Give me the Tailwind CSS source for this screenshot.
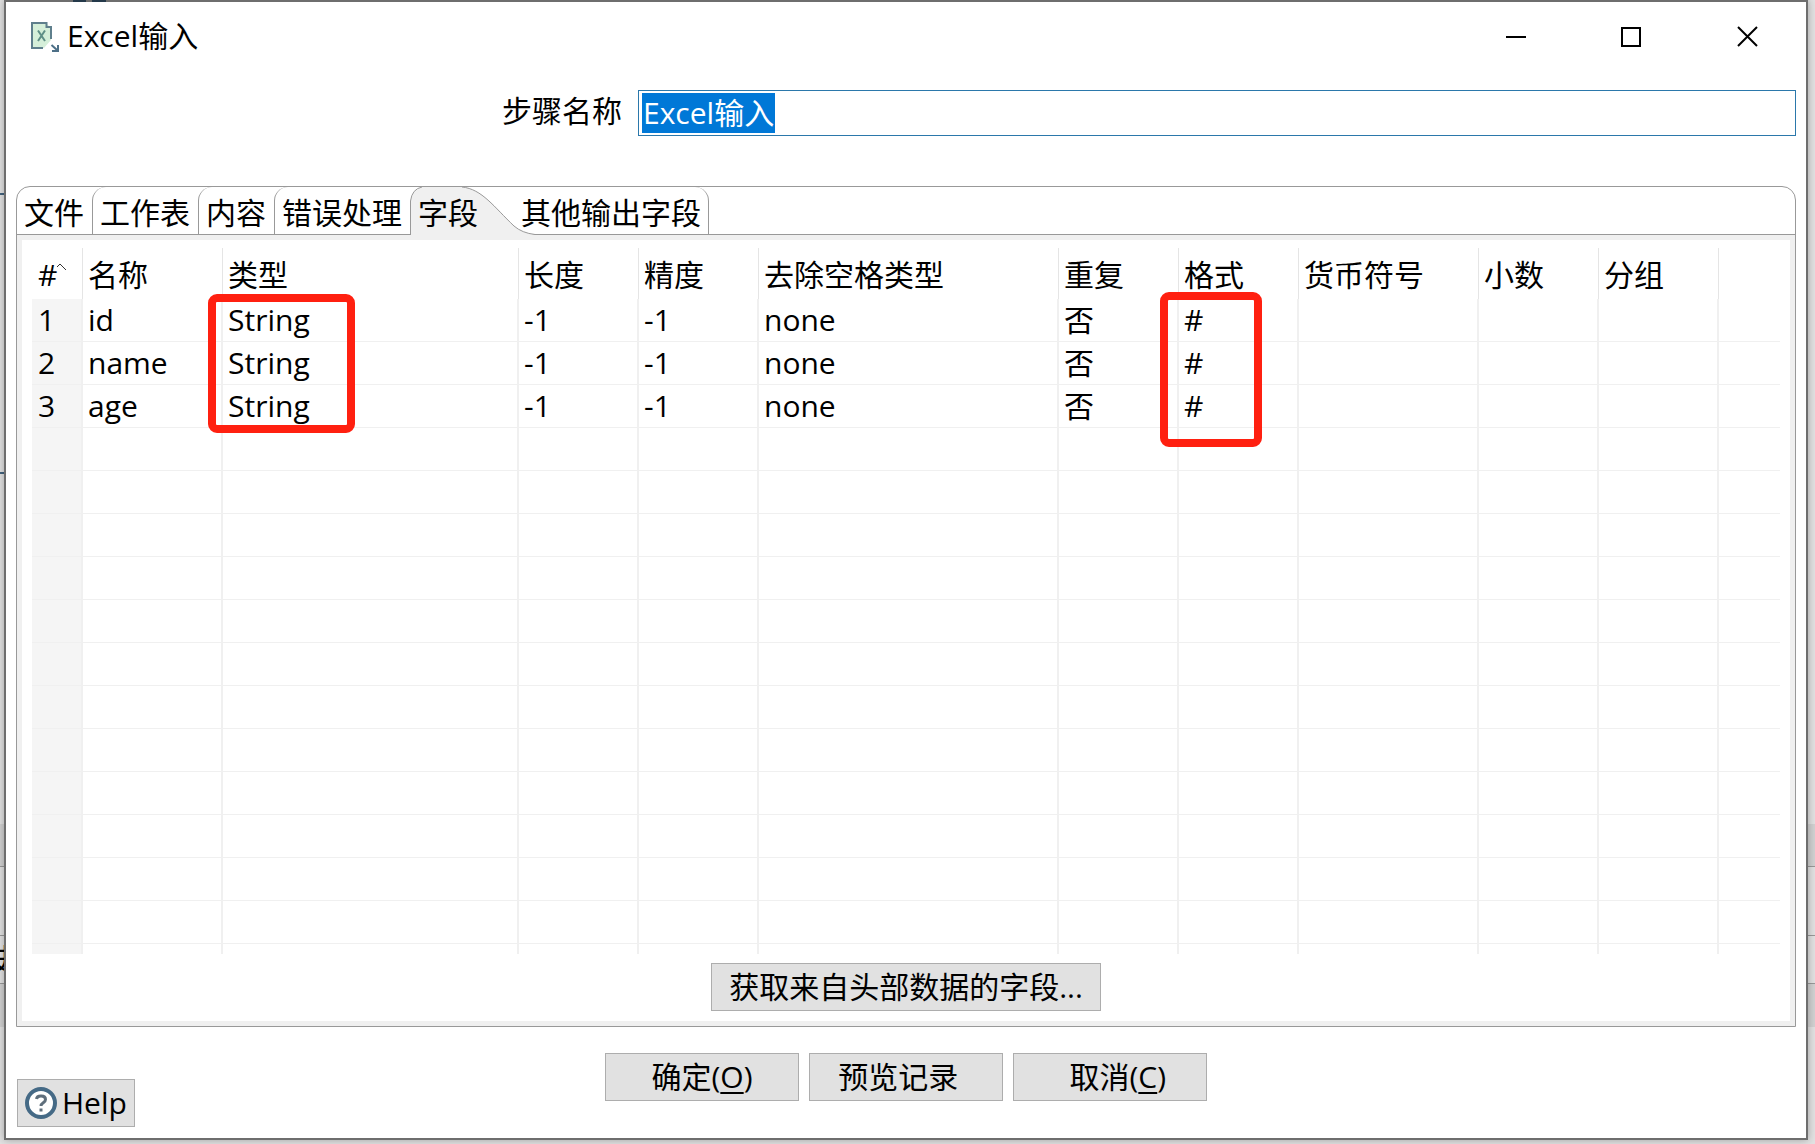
<!DOCTYPE html>
<html lang="zh-CN">
<head>
<meta charset="utf-8">
<title>Excel输入</title>
<script src="https://cdn.jsdelivr.net/npm/@tailwindcss/browser@4"></script>
</head>
<body class="relative min-h-screen flex flex-col overflow-x-hidden bg-[#e2e2e2] pl-1 pr-[7px] pb-1 font-['Open_Sans','Noto_Sans_CJK_SC',sans-serif] text-[30px] leading-[42px] text-black">
  <!-- parts of the application behind the dialog -->
  <div class="absolute inset-x-0 top-[824px] h-[42px] bg-[#d2d2d2]" aria-hidden="true"></div>
  <div class="absolute inset-x-0 top-[866px] h-px bg-[#999]" aria-hidden="true"></div>
  <div class="absolute inset-x-0 top-[935px] h-px bg-[#999]" aria-hidden="true"></div>
  <div class="absolute inset-x-0 top-[983px] h-[44px] border-t border-[#999] bg-[#d2d2d2]" aria-hidden="true"></div>
  <div class="absolute left-0 top-[193px] h-[2px] w-1 bg-[#44647f]" aria-hidden="true"></div>
  <div class="absolute left-0 top-[472px] h-[2px] w-1 bg-[#44647f]" aria-hidden="true"></div>
  <div class="absolute -left-[10px] top-[938px]" aria-hidden="true">史</div>

  <main class="relative flex flex-1 flex-col border-2 border-[#6e6e6e] bg-white shadow-[0_0_8px_rgba(0,0,0,0.3)]">
    <div class="absolute -top-[2px] left-[67px] flex gap-1.5" aria-hidden="true"><span class="h-[2px] w-[13px] bg-[#24394a]"></span><span class="h-[2px] w-[14px] bg-[#24394a]"></span></div>
    <header class="flex h-[68px] items-center pl-6 pr-[46px]">
      <svg class="h-[34px] w-[32px]" viewBox="0 0 32 34" fill="none" aria-hidden="true">
        <path d="M2 4H16L21 9V21L14 29H2Z" fill="#d5efd9"/>
        <path d="M13 29H2V4H16.500V8H21V20" stroke="#5f7f8c" stroke-width="2"/>
        <path d="M8 11.500L15 22M15 11.500L8 22" stroke="#5f8f86" stroke-width="2"/>
        <path d="M21.500 26L27 31M28 26V32H22" stroke="#4d7087" stroke-width="2"/>
      </svg>
      <h1 class="pl-[5px]">Excel输入</h1>
      <div class="ml-auto flex gap-[92px]">
        <button aria-label="最小化"><svg class="h-6 w-6" viewBox="0 0 24 24" fill="none" stroke="#000" stroke-width="2"><path d="M2 13H22"/></svg></button>
        <button aria-label="最大化"><svg class="h-6 w-6" viewBox="0 0 24 24" fill="none" stroke="#000" stroke-width="2"><path d="M2 4H20V22H2Z"/></svg></button>
        <button aria-label="关闭"><svg class="h-6 w-6" viewBox="0 0 24 24" fill="none" stroke="#000" stroke-width="2"><path d="M2 3L21 22M21 3L2 22"/></svg></button>
      </div>
    </header>

    <div class="flex items-center pr-[10px] pt-5">
      <label for="step" class="w-[632px] pr-4 pb-1 text-right">步骤名称</label>
      <div class="relative flex-1">
        <input id="step" value="Excel输入" class="block h-[46px] w-full border border-[#2b78ab] bg-white px-[3px] text-transparent outline-none">
        <span class="pointer-events-none absolute left-1 top-[3px] h-10 bg-[#0078d7] px-px leading-10 text-white" aria-hidden="true">Excel输入</span>
      </div>
    </div>

    <section class="mx-[10px] mt-[50px] flex flex-1 flex-col rounded-t-[14px] border border-[#999]">
      <div class="flex h-12 border-b border-[#999]" role="tablist">
        <button role="tab" class="border-r border-transparent px-[7px] pt-1">文件</button>
        <button role="tab" class="rounded-tl-[14px] border-l border-[#999] pl-[7px] pr-2 pt-1">工作表</button>
        <button role="tab" class="rounded-tl-[14px] border-l border-[#999] pl-[7px] pr-2 pt-1">内容</button>
        <button role="tab" class="rounded-tl-[14px] border-l border-[#999] pl-[7px] pr-2 pt-1">错误处理</button>
        <button role="tab" aria-selected="true" class="relative h-12 w-[104px] pl-2 pt-1 text-left">
          <svg class="absolute left-0 top-0 h-12 w-[125px]" viewBox="0 0 125 48" aria-hidden="true"><path d="M0.500 48V14Q2 2 12 0H52C72 2 84 20 104 39Q112 46 125 47.500V48Z" fill="#f0f0f0"/><path d="M0.500 48V14Q2 2 12 0M52 0C72 2 84 20 104 39Q112 46 125 47.500" fill="none" stroke="#999"/></svg>
          <span class="relative">字段</span>
        </button>
        <button role="tab" class="rounded-tr-[14px] border-r border-[#999] px-[7px] pt-1">其他输出字段</button>
      </div>
      <div class="flex flex-1 flex-col border-[5px] border-[#f0f0f0] px-[10px] pt-2">
        <div class="relative h-[706px] overflow-hidden">
          <table class="w-full table-fixed border-separate border-spacing-0 text-left">
            <colgroup><col class="w-[51px]"><col class="w-[140px]"><col class="w-[296px]"><col class="w-[120px]"><col class="w-[120px]"><col class="w-[300px]"><col class="w-[120px]"><col class="w-[120px]"><col class="w-[180px]"><col class="w-[120px]"><col class="w-[120px]"><col></colgroup>
            <thead class="[&_th]:h-[51px] [&_th]:border-r [&_th]:border-[#e5e5e5] [&_th]:p-0 [&_th]:pl-[5px] [&_th]:pt-[3px] [&_th]:font-normal [&_th:first-child]:pl-1.5 [&_th:last-child]:border-r-0">
              <tr><th><span class="flex">#<svg class="mt-2 h-3 w-2.5" viewBox="0 0 10 12" fill="none" stroke="#333" aria-hidden="true"><path d="M0 5L3 2L9 8"/></svg></span></th><th>名称</th><th>类型</th><th>长度</th><th>精度</th><th>去除空格类型</th><th>重复</th><th>格式</th><th>货币符号</th><th>小数</th><th>分组</th><th></th></tr>
            </thead>
            <tbody id="rows" class="[&_td]:h-[43px] [&_td]:border-b [&_td]:border-r-2 [&_td]:border-[#f0f0f0] [&_td]:p-0 [&_td]:pl-[5px] [&_td:first-child]:bg-[#f5f5f5] [&_td:first-child]:pl-1.5 [&_td:last-child]:border-r-0">
              <tr><td>1</td><td>id</td><td>String</td><td>-1</td><td>-1</td><td>none</td><td>否</td><td>#</td><td></td><td></td><td></td><td></td></tr>
              <tr><td>2</td><td>name</td><td>String</td><td>-1</td><td>-1</td><td>none</td><td>否</td><td>#</td><td></td><td></td><td></td><td></td></tr>
              <tr><td>3</td><td>age</td><td>String</td><td>-1</td><td>-1</td><td>none</td><td>否</td><td>#</td><td></td><td></td><td></td><td></td></tr>
            </tbody>
          </table>
        </div>
        <div class="flex justify-center pt-[9px]">
          <button class="h-12 w-[390px] border border-[#adadad] bg-[#e1e1e1]">获取来自头部数据的字段...</button>
        </div>
      </div>
    </section>

    <footer class="relative h-[111px] pt-[26px]">
      <div class="flex justify-center gap-[10px]">
        <button class="h-12 w-[194px] border border-[#adadad] bg-[#e1e1e1]">确定(<u class="decoration-2 underline-offset-4">O</u>)</button>
        <button class="h-12 w-[194px] border border-[#adadad] bg-[#e1e1e1]">预览记录&nbsp;&nbsp;</button>
        <button class="h-12 w-[194px] border border-[#adadad] bg-[#e1e1e1]">&nbsp;&nbsp;取消(<u class="decoration-2 underline-offset-4">C</u>)</button>
      </div>
      <button class="absolute bottom-[11px] left-[11px] flex h-12 w-[118px] items-center gap-[5px] border border-[#adadad] bg-[#e1e1e1] pl-[7px]">
        <svg class="h-8 w-8" viewBox="0 0 32 32" fill="none" aria-hidden="true"><circle cx="16" cy="16" r="14" fill="#fff" stroke="#456a86" stroke-width="4"/><path d="M11.500 12C12 8 20.500 8 20.500 12.500C20.500 16 16 15.500 16 19" stroke="#5f6f7c" stroke-width="3"/><path d="M14.500 21.500H17.500V24.500H14.500Z" fill="#5f6f7c"/></svg>
        Help
      </button>
    </footer>

    <!-- highlight marks over the table -->
    <div class="pointer-events-none absolute left-[202px] top-[292px] h-[139px] w-[147px] rounded-[9px] border-8 border-[#ff2010]" aria-hidden="true"></div>
    <div class="pointer-events-none absolute left-[1154px] top-[290px] h-[155px] w-[102px] rounded-[9px] border-8 border-[#ff2010]" aria-hidden="true"></div>
  </main>
  <script>
    // pad the grid with empty rows
    const rows = document.getElementById('rows');
    for (let i = 0; i < 13; i++) rows.insertAdjacentHTML('beforeend', '<tr>' + '<td></td>'.repeat(12) + '</tr>');
  </script>
</body>
</html>
